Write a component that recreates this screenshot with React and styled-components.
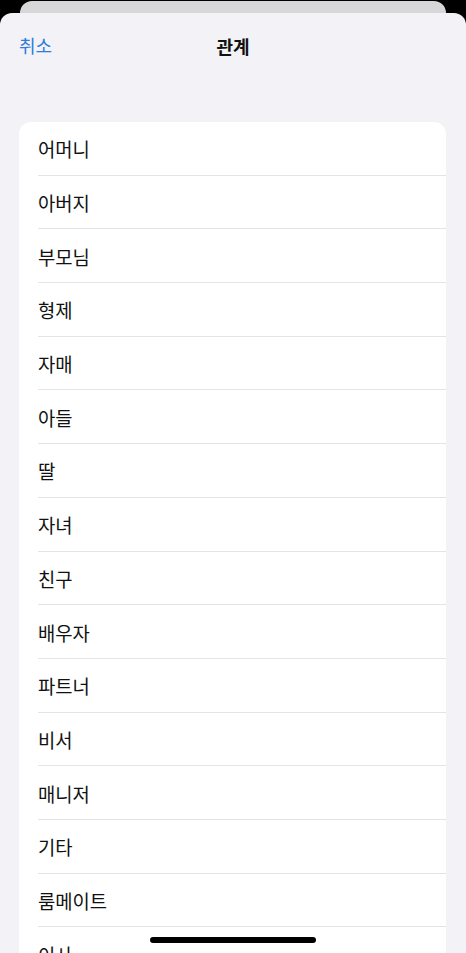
import styled, { createGlobalStyle } from 'styled-components';

const GlobalStyle = createGlobalStyle`
  html, body {
    margin: 0;
    padding: 0;
    background: #000;
    font-family: "Noto Sans CJK KR", "Noto Sans", sans-serif;
    -webkit-font-smoothing: antialiased;
  }
`;

const Screen = styled.div`
  height: 953px;
  overflow: hidden;
  display: flex;
  flex-direction: column;
  padding-top: 1px;
  box-sizing: border-box;
`;

const BackSheet = styled.div`
  margin: 0 20px;
  height: 12px;
  flex: none;
  background: #d7d7d9;
  border-radius: 12px 12px 0 0;
`;

const Sheet = styled.div`
  flex: 1;
  background: #f2f2f7;
  border-radius: 12px 12px 0 0;
  display: flex;
  flex-direction: column;
  overflow: hidden;
`;

const Header = styled.div`
  position: relative;
  height: 64px;
  flex: none;
  display: flex;
  align-items: center;
  justify-content: center;
  margin-bottom: 45px;
`;

const CancelButton = styled.button`
  position: absolute;
  left: 19px;
  top: 18px;
  border: none;
  background: none;
  padding: 0;
  font-family: inherit;
  font-size: 18px;
  line-height: 28px;
  color: #2f7cdc;
`;

const Title = styled.h1`
  margin: 0;
  margin-top: 2px;
  font-size: 18px;
  font-weight: 700;
  line-height: 28px;
  color: #111;
`;

const Card = styled.ul`
  flex: none;
  list-style: none;
  margin: 0 20px 0 19px;
  padding: 0;
  background: #fff;
  border-radius: 12px;
  overflow: hidden;
`;

const Row = styled.li`
  height: 53.7px;
  box-sizing: border-box;
  margin-left: 19px;
  display: flex;
  align-items: center;
  font-size: 18.8px;
  color: #111;
  border-bottom: 1px solid #e4e4e7;
  padding-top: 1px;
`;

const HomeIndicator = styled.div`
  position: absolute;
  left: 150px;
  top: 937px;
  width: 166px;
  height: 6px;
  border-radius: 3px;
  background: #000;
`;

const relations = [
  '어머니',
  '아버지',
  '부모님',
  '형제',
  '자매',
  '아들',
  '딸',
  '자녀',
  '친구',
  '배우자',
  '파트너',
  '비서',
  '매니저',
  '기타',
  '룸메이트',
  '이사',
];

export default function App() {
  return (
    <>
      <GlobalStyle />
      <Screen>
        <BackSheet />
        <Sheet>
          <Header>
            <CancelButton>취소</CancelButton>
            <Title>관계</Title>
          </Header>
          <Card>
            {relations.map((name) => (
              <Row key={name}>{name}</Row>
            ))}
          </Card>
        </Sheet>
      </Screen>
      <HomeIndicator />
    </>
  );
}
